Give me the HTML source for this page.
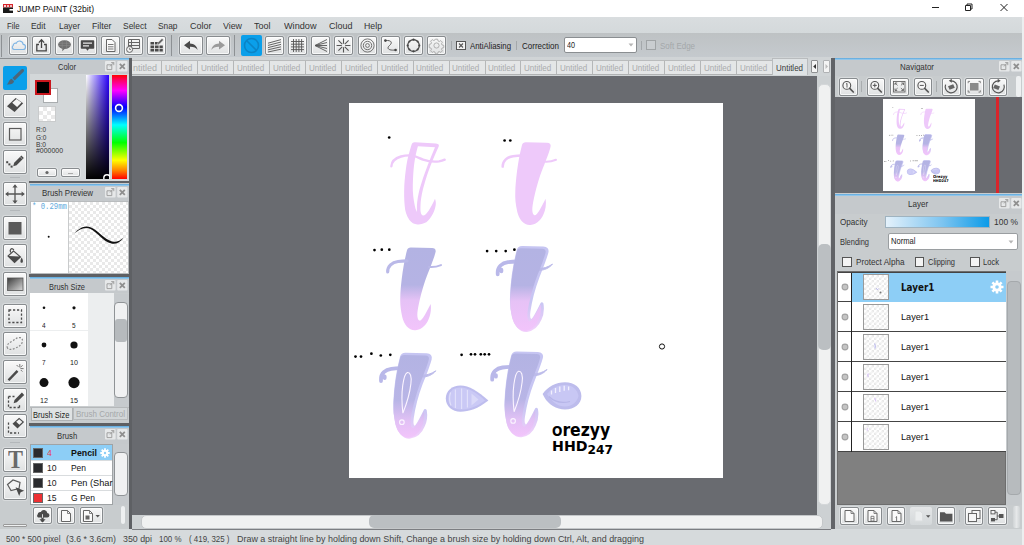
<!DOCTYPE html>
<html lang="en"><head><meta charset="utf-8"><title>JUMP PAINT (32bit)</title>
<style>
html,body{margin:0;padding:0;background:#fff;}
body{width:1024px;height:545px;overflow:hidden;position:relative;font-family:"Liberation Sans",sans-serif;}
#app{position:absolute;left:0;top:0;width:1024px;height:545px;overflow:hidden;background:#c8ccce;}
#app div,#app svg,#app span.t{position:absolute;box-sizing:border-box;}
span.t{white-space:nowrap;transform-origin:0 0;display:block;}
.btn{border:1px solid #878b8e;border-radius:2px;background:linear-gradient(#f9f9f9,#dfe1e2);box-shadow:0 0 0 1px rgba(255,255,255,.3),inset 0 0 0 1px rgba(255,255,255,.75);}
.cb{border:1px solid #555;background:#f4f4f4;}
</style></head>
<body><div id="app">
<div style="left:0px;top:0px;width:1024px;height:17px;background:#fff;"></div>
<svg style="left:3px;top:4px;" width="10" height="9" viewBox="0 0 10 9"><rect x="0" y="0" width="10" height="3.5" fill="#d8232a"/><rect x="0" y="3.5" width="10" height="5.5" fill="#1a1a1a"/><rect x="1" y="1" width="2" height="2" fill="#fff" opacity=".8"/><rect x="4" y="1" width="2" height="2" fill="#fff" opacity=".7"/><rect x="7" y="1" width="2" height="2" fill="#fff" opacity=".7"/><rect x="6.5" y="5" width="3.5" height="1.6" fill="#fff"/></svg>
<span id="t1" class="t" style="left:17px;top:3.77px;font-size:9.6px;line-height:9.6px;color:#111;transform:scaleX(0.8970);">JUMP PAINT (32bit)</span>
<svg style="left:925px;top:0px;" width="99" height="17" viewBox="0 0 99 17"><path d="M7 7.5h7" stroke="#222" stroke-width="1" fill="none"/><path d="M40.5 5.5h5v5h-5z M42 5.5v-1.5h5v5h-1.5" stroke="#222" stroke-width="1" fill="none"/><path d="M75.5 4l7 7M82.5 4l-7 7" stroke="#222" stroke-width="1" fill="none"/></svg>
<div style="left:0px;top:17px;width:1024px;height:16px;background:linear-gradient(#d9dddf,#d4d9db);"></div>
<span id="t2" class="t" style="left:6.5px;top:20.77px;font-size:9.6px;line-height:9.6px;color:#333;transform:scaleX(0.8081);">File</span>
<span id="t3" class="t" style="left:31px;top:20.77px;font-size:9.6px;line-height:9.6px;color:#333;transform:scaleX(0.8763);">Edit</span>
<span id="t4" class="t" style="left:58.5px;top:20.77px;font-size:9.6px;line-height:9.6px;color:#333;transform:scaleX(0.8750);">Layer</span>
<span id="t5" class="t" style="left:91.5px;top:20.77px;font-size:9.6px;line-height:9.6px;color:#333;transform:scaleX(0.9143);">Filter</span>
<span id="t6" class="t" style="left:122.5px;top:20.77px;font-size:9.6px;line-height:9.6px;color:#333;transform:scaleX(0.8811);">Select</span>
<span id="t7" class="t" style="left:158px;top:20.77px;font-size:9.6px;line-height:9.6px;color:#333;transform:scaleX(0.8703);">Snap</span>
<span id="t8" class="t" style="left:189.5px;top:20.77px;font-size:9.6px;line-height:9.6px;color:#333;transform:scaleX(0.9373);">Color</span>
<span id="t9" class="t" style="left:223px;top:20.77px;font-size:9.6px;line-height:9.6px;color:#333;transform:scaleX(0.9212);">View</span>
<span id="t10" class="t" style="left:254px;top:20.77px;font-size:9.6px;line-height:9.6px;color:#333;transform:scaleX(0.9370);">Tool</span>
<span id="t11" class="t" style="left:283.5px;top:20.77px;font-size:9.6px;line-height:9.6px;color:#333;transform:scaleX(0.9524);">Window</span>
<span id="t12" class="t" style="left:328.5px;top:20.77px;font-size:9.6px;line-height:9.6px;color:#333;transform:scaleX(0.9371);">Cloud</span>
<span id="t13" class="t" style="left:364px;top:20.77px;font-size:9.6px;line-height:9.6px;color:#333;transform:scaleX(0.9121);">Help</span>
<div style="left:0px;top:33px;width:1024px;height:25px;background:linear-gradient(#bec2c4,#c5cace);"></div>
<div style="left:1px;top:35px;width:1px;height:22px;background:#8d9194;"></div>
<div class="btn" style="left:9px;top:36px;width:19px;height:19px;"></div>
<div class="btn" style="left:32px;top:36px;width:19px;height:19px;"></div>
<div class="btn" style="left:55px;top:36px;width:19px;height:19px;"></div>
<div class="btn" style="left:78px;top:36px;width:19px;height:19px;"></div>
<div class="btn" style="left:101px;top:36px;width:19px;height:19px;"></div>
<div class="btn" style="left:124px;top:36px;width:19px;height:19px;"></div>
<div class="btn" style="left:147px;top:36px;width:19px;height:19px;"></div>
<div style="left:171px;top:35px;width:1px;height:21px;background:#8d9194;"></div>
<div class="btn" style="left:179px;top:36px;width:24px;height:19px;"></div>
<div class="btn" style="left:206px;top:36px;width:24px;height:19px;"></div>
<div style="left:234px;top:35px;width:1px;height:21px;background:#8d9194;"></div>
<div style="left:241px;top:35px;width:21px;height:21px;background:#0a9fea;border-radius:2px;"></div>
<div class="btn" style="left:265px;top:36px;width:19px;height:19px;"></div>
<div class="btn" style="left:288px;top:36px;width:19px;height:19px;"></div>
<div class="btn" style="left:311px;top:36px;width:19px;height:19px;"></div>
<div class="btn" style="left:334px;top:36px;width:19px;height:19px;"></div>
<div class="btn" style="left:357.5px;top:36px;width:19px;height:19px;"></div>
<div class="btn" style="left:381px;top:36px;width:19px;height:19px;"></div>
<div class="btn" style="left:404px;top:36px;width:19px;height:19px;"></div>
<div class="btn" style="left:427px;top:36px;width:19px;height:19px;"></div>
<div style="left:451px;top:41px;width:1.2px;height:8.5px;background:#a4a8ab;"></div>
<div class="cb" style="left:456px;top:41px;width:10px;height:9px;"></div>
<span id="t14" class="t" style="left:470px;top:40.87px;font-size:9.6px;line-height:9.6px;color:#222;transform:scaleX(0.8177);">AntiAliasing</span>
<div style="left:516px;top:41px;width:1.2px;height:8.5px;background:#a4a8ab;"></div>
<span id="t15" class="t" style="left:522px;top:40.87px;font-size:9.6px;line-height:9.6px;color:#222;transform:scaleX(0.8359);">Correction</span>
<div style="left:564px;top:37px;width:73px;height:16px;background:#fff;border:1px solid #8a8e91;border-radius:2px;"></div>
<span id="t16" class="t" style="left:567px;top:41.42px;font-size:8.6px;line-height:8.6px;color:#222;transform:scaleX(0.8366);">40</span>
<svg style="left:628px;top:43px;" width="6" height="4" viewBox="0 0 6 4"><path d="M0.5 0.5L3 3.5L5.5 0.5z" fill="#b5b5b5"/></svg>
<div style="left:641px;top:41px;width:1.2px;height:8.5px;background:#a4a8ab;"></div>
<div style="left:646px;top:40px;width:10px;height:10px;border:1px solid #a0a4a6;background:#c9cdd0;"></div>
<span id="t17" class="t" style="left:659.5px;top:40.87px;font-size:9.6px;line-height:9.6px;color:#a4a8aa;transform:scaleX(0.8306);">Soft Edge</span>
<div style="left:0px;top:58px;width:30px;height:472px;background:#c8ccce;"></div>
<div style="left:3px;top:66px;width:24px;height:24px;background:#0a9fea;border-radius:2px;"></div>
<div class="btn" style="left:3px;top:94px;width:24px;height:24px;"></div>
<div class="btn" style="left:3px;top:122px;width:24px;height:24px;"></div>
<div class="btn" style="left:3px;top:150px;width:24px;height:24px;"></div>
<div class="btn" style="left:3px;top:182px;width:24px;height:24px;"></div>
<div class="btn" style="left:3px;top:216px;width:24px;height:24px;"></div>
<div class="btn" style="left:3px;top:244px;width:24px;height:24px;"></div>
<div class="btn" style="left:3px;top:272px;width:24px;height:24px;"></div>
<div class="btn" style="left:3px;top:304px;width:24px;height:24px;"></div>
<div class="btn" style="left:3px;top:332px;width:24px;height:24px;"></div>
<div class="btn" style="left:3px;top:360px;width:24px;height:24px;"></div>
<div class="btn" style="left:3px;top:388px;width:24px;height:24px;"></div>
<div class="btn" style="left:3px;top:414px;width:24px;height:24px;"></div>
<div class="btn" style="left:3px;top:448px;width:24px;height:24px;"></div>
<div class="btn" style="left:3px;top:476px;width:24px;height:24px;"></div>
<div style="left:10px;top:177px;width:10px;height:1px;background:#b3b7ba;"></div>
<div style="left:10px;top:210px;width:10px;height:1px;background:#b3b7ba;"></div>
<div style="left:10px;top:299px;width:10px;height:1px;background:#b3b7ba;"></div>
<div style="left:10px;top:442px;width:10px;height:1px;background:#b3b7ba;"></div>
<div style="left:3px;top:524px;width:24px;height:3px;background:#eef0f1;border:1px solid #999;border-radius:1px;"></div>
<div style="left:0px;top:57.5px;width:30px;height:1px;background:#8a8e91;"></div>
<div style="left:30px;top:58px;width:99px;height:472px;background:#c8ccce;"></div>
<div style="left:129px;top:58px;width:3px;height:472px;background:#5e6064;"></div>
<div style="left:30px;top:73.6px;width:99px;height:107px;background:#d3d7d9;"></div>
<div style="left:30px;top:59px;width:99px;height:14.6px;background:#c5c9cc;"></div>
<div style="left:30px;top:58px;width:99px;height:2px;background:linear-gradient(#57a6dd,#a4d0ee);"></div>
<span id="t18" class="t" style="left:58px;top:62.37px;font-size:9.6px;line-height:9.6px;color:#333;transform:scaleX(0.7847);">Color</span>
<svg style="left:105px;top:61.2px;" width="22.5" height="11" viewBox="0 0 22.5 11"><rect x="0" y="0" width="10.6" height="10.6" rx="1" fill="#e6e8e9"/><path d="M2 3.8h4.800v4.800h-4.800z" stroke="#999" stroke-width=".9" fill="none"/><path d="M5 5.400L8.800 1.600M6.200 1.600h2.600v2.600" stroke="#999" stroke-width=".9" fill="none"/><rect x="12.2" y="0" width="10.300" height="10.600" rx="1" fill="#e6e8e9"/><path d="M14.800 2.800l5 5M19.800 2.800l-5 5" stroke="#8f8f8f" stroke-width="1.800" fill="none"/></svg>
<div style="left:29px;top:180.70000000000002px;width:100px;height:2.6px;background:#5e6064;"></div>
<div style="left:30px;top:184.8px;width:99px;height:16px;background:#c5c9cc;"></div>
<div style="left:30px;top:183.8px;width:99px;height:2px;background:linear-gradient(#57a6dd,#a4d0ee);"></div>
<span id="t19" class="t" style="left:42px;top:187.67px;font-size:9.6px;line-height:9.6px;color:#333;transform:scaleX(0.8245);">Brush Preview</span>
<svg style="left:105px;top:187.0px;" width="22.5" height="11" viewBox="0 0 22.5 11"><rect x="0" y="0" width="10.6" height="10.6" rx="1" fill="#e6e8e9"/><path d="M2 3.8h4.800v4.800h-4.800z" stroke="#999" stroke-width=".9" fill="none"/><path d="M5 5.400L8.800 1.600M6.200 1.600h2.600v2.600" stroke="#999" stroke-width=".9" fill="none"/><rect x="12.2" y="0" width="10.300" height="10.600" rx="1" fill="#e6e8e9"/><path d="M14.800 2.800l5 5M19.800 2.800l-5 5" stroke="#8f8f8f" stroke-width="1.800" fill="none"/></svg>
<div style="left:29px;top:273.5px;width:100px;height:3px;background:#5e6064;"></div>
<div style="left:30px;top:278px;width:99px;height:15.4px;background:#c5c9cc;"></div>
<div style="left:30px;top:277px;width:99px;height:2px;background:linear-gradient(#57a6dd,#a4d0ee);"></div>
<span id="t20" class="t" style="left:49px;top:281.57px;font-size:9.6px;line-height:9.6px;color:#333;transform:scaleX(0.7760);">Brush Size</span>
<svg style="left:105px;top:280.2px;" width="22.5" height="11" viewBox="0 0 22.5 11"><rect x="0" y="0" width="10.6" height="10.6" rx="1" fill="#e6e8e9"/><path d="M2 3.8h4.800v4.800h-4.800z" stroke="#999" stroke-width=".9" fill="none"/><path d="M5 5.400L8.800 1.600M6.200 1.600h2.600v2.600" stroke="#999" stroke-width=".9" fill="none"/><rect x="12.2" y="0" width="10.300" height="10.600" rx="1" fill="#e6e8e9"/><path d="M14.800 2.800l5 5M19.800 2.800l-5 5" stroke="#8f8f8f" stroke-width="1.800" fill="none"/></svg>
<div style="left:29px;top:423.0px;width:100px;height:2.5px;background:#5e6064;"></div>
<div style="left:30px;top:427px;width:99px;height:16.5px;background:#c5c9cc;"></div>
<div style="left:30px;top:426px;width:99px;height:2px;background:linear-gradient(#57a6dd,#a4d0ee);"></div>
<span id="t21" class="t" style="left:57px;top:431.27px;font-size:9.6px;line-height:9.6px;color:#333;transform:scaleX(0.8060);">Brush</span>
<svg style="left:105px;top:429.2px;" width="22.5" height="11" viewBox="0 0 22.5 11"><rect x="0" y="0" width="10.6" height="10.6" rx="1" fill="#e6e8e9"/><path d="M2 3.8h4.800v4.800h-4.800z" stroke="#999" stroke-width=".9" fill="none"/><path d="M5 5.400L8.800 1.600M6.200 1.600h2.600v2.600" stroke="#999" stroke-width=".9" fill="none"/><rect x="12.2" y="0" width="10.300" height="10.600" rx="1" fill="#e6e8e9"/><path d="M14.800 2.800l5 5M19.800 2.800l-5 5" stroke="#8f8f8f" stroke-width="1.800" fill="none"/></svg>
<div style="left:132px;top:57px;width:700px;height:19px;background:#d0d4d6;"></div>
<div style="left:132px;top:60px;width:676px;height:15px;background:#e4e6e7;border-top:1px solid #b9bbbc;border-bottom:1px solid #b0b2b3;"></div>
<span id="t22" class="t" style="left:132.5px;top:62.74px;font-size:9.4px;line-height:9.4px;color:#a9abac;transform:scaleX(0.9588);">ntitled</span>
<div style="left:161px;top:61px;width:1px;height:13px;background:#b5b7b8;"></div>
<span id="t23" class="t" style="left:165.0px;top:62.74px;font-size:9.4px;line-height:9.4px;color:#a9abac;transform:scaleX(0.8586);">Untitled</span>
<div style="left:197px;top:61px;width:1px;height:13px;background:#b5b7b8;"></div>
<span id="t24" class="t" style="left:200.92000000000002px;top:62.74px;font-size:9.4px;line-height:9.4px;color:#a9abac;transform:scaleX(0.8586);">Untitled</span>
<div style="left:233px;top:61px;width:1px;height:13px;background:#b5b7b8;"></div>
<span id="t25" class="t" style="left:236.84px;top:62.74px;font-size:9.4px;line-height:9.4px;color:#a9abac;transform:scaleX(0.8586);">Untitled</span>
<div style="left:269px;top:61px;width:1px;height:13px;background:#b5b7b8;"></div>
<span id="t26" class="t" style="left:272.76px;top:62.74px;font-size:9.4px;line-height:9.4px;color:#a9abac;transform:scaleX(0.8586);">Untitled</span>
<div style="left:305px;top:61px;width:1px;height:13px;background:#b5b7b8;"></div>
<span id="t27" class="t" style="left:308.68px;top:62.74px;font-size:9.4px;line-height:9.4px;color:#a9abac;transform:scaleX(0.8586);">Untitled</span>
<div style="left:341px;top:61px;width:1px;height:13px;background:#b5b7b8;"></div>
<span id="t28" class="t" style="left:344.6px;top:62.74px;font-size:9.4px;line-height:9.4px;color:#a9abac;transform:scaleX(0.8586);">Untitled</span>
<div style="left:377px;top:61px;width:1px;height:13px;background:#b5b7b8;"></div>
<span id="t29" class="t" style="left:380.52000000000004px;top:62.74px;font-size:9.4px;line-height:9.4px;color:#a9abac;transform:scaleX(0.8586);">Untitled</span>
<div style="left:413px;top:61px;width:1px;height:13px;background:#b5b7b8;"></div>
<span id="t30" class="t" style="left:416.44px;top:62.74px;font-size:9.4px;line-height:9.4px;color:#a9abac;transform:scaleX(0.8586);">Untitled</span>
<div style="left:449px;top:61px;width:1px;height:13px;background:#b5b7b8;"></div>
<span id="t31" class="t" style="left:452.36px;top:62.74px;font-size:9.4px;line-height:9.4px;color:#a9abac;transform:scaleX(0.8586);">Untitled</span>
<div style="left:485px;top:61px;width:1px;height:13px;background:#b5b7b8;"></div>
<span id="t32" class="t" style="left:488.28000000000003px;top:62.74px;font-size:9.4px;line-height:9.4px;color:#a9abac;transform:scaleX(0.8586);">Untitled</span>
<div style="left:520px;top:61px;width:1px;height:13px;background:#b5b7b8;"></div>
<span id="t33" class="t" style="left:524.2px;top:62.74px;font-size:9.4px;line-height:9.4px;color:#a9abac;transform:scaleX(0.8586);">Untitled</span>
<div style="left:556px;top:61px;width:1px;height:13px;background:#b5b7b8;"></div>
<span id="t34" class="t" style="left:560.1200000000001px;top:62.74px;font-size:9.4px;line-height:9.4px;color:#a9abac;transform:scaleX(0.8586);">Untitled</span>
<div style="left:592px;top:61px;width:1px;height:13px;background:#b5b7b8;"></div>
<span id="t35" class="t" style="left:596.0400000000001px;top:62.74px;font-size:9.4px;line-height:9.4px;color:#a9abac;transform:scaleX(0.8586);">Untitled</span>
<div style="left:628px;top:61px;width:1px;height:13px;background:#b5b7b8;"></div>
<span id="t36" class="t" style="left:631.96px;top:62.74px;font-size:9.4px;line-height:9.4px;color:#a9abac;transform:scaleX(0.8586);">Untitled</span>
<div style="left:664px;top:61px;width:1px;height:13px;background:#b5b7b8;"></div>
<span id="t37" class="t" style="left:667.8800000000001px;top:62.74px;font-size:9.4px;line-height:9.4px;color:#a9abac;transform:scaleX(0.8586);">Untitled</span>
<div style="left:700px;top:61px;width:1px;height:13px;background:#b5b7b8;"></div>
<span id="t38" class="t" style="left:703.8000000000002px;top:62.74px;font-size:9.4px;line-height:9.4px;color:#a9abac;transform:scaleX(0.8586);">Untitled</span>
<div style="left:736px;top:61px;width:1px;height:13px;background:#b5b7b8;"></div>
<span id="t39" class="t" style="left:739.72px;top:62.74px;font-size:9.4px;line-height:9.4px;color:#a9abac;transform:scaleX(0.8586);">Untitled</span>
<div style="left:771.94px;top:57.5px;width:36.5px;height:17.5px;background:#dfe3e5;border:1px solid #b9bcbe;border-bottom:none;"></div>
<span id="t40" class="t" style="left:775.94px;top:62.74px;font-size:9.4px;line-height:9.4px;color:#3a3a3a;transform:scaleX(0.8491);">Untitled</span>
<div style="left:811px;top:60px;width:7px;height:13px;background:#f4f4f4;border:1px solid #8e9092;border-radius:1px;"></div>
<div style="left:823px;top:60px;width:7px;height:13px;background:#f4f4f4;border:1px solid #b0b2b4;border-radius:1px;"></div>
<svg style="left:812px;top:63px;" width="5" height="7" viewBox="0 0 5 7"><path d="M4 1L1.2 3.5L4 6z" fill="#333"/></svg>
<svg style="left:824px;top:63px;" width="5" height="7" viewBox="0 0 5 7"><path d="M1.5 1L4 3.5L1.5 6z" fill="#bbb"/></svg>
<div style="left:132px;top:75.5px;width:685px;height:440px;background:#696b70;"></div>
<div style="left:349px;top:103px;width:374px;height:375px;background:#fff;"></div>
<div style="left:817px;top:75.5px;width:14px;height:454px;background:#cdd1d3;"></div>
<div style="left:817.5px;top:84px;width:13.5px;height:421px;background:#f0f1f1;border:1px solid #d4d7d9;border-radius:5px;"></div>
<div style="left:818px;top:243.5px;width:12.5px;height:106px;background:#bbbfc2;border-radius:5px;"></div>
<div style="left:132px;top:514.5px;width:699px;height:15px;background:#cdd1d3;"></div>
<div style="left:141px;top:514.5px;width:682px;height:14px;background:#f0f1f1;border:1px solid #c4c7c9;border-radius:5px;"></div>
<div style="left:369px;top:515px;width:192px;height:13px;background:#bbbfc2;border-radius:5px;"></div>
<div style="left:132px;top:528.5px;width:699px;height:1px;background:#7c7e82;"></div>
<div style="left:831px;top:58px;width:4px;height:472px;background:#616367;"></div>
<div style="left:835px;top:58px;width:189px;height:472px;background:#c8ccce;"></div>
<div style="left:835px;top:59px;width:189px;height:17px;background:#c5c9cc;"></div>
<div style="left:835px;top:58px;width:189px;height:2px;background:linear-gradient(#57a6dd,#a4d0ee);"></div>
<span id="t41" class="t" style="left:900px;top:62.37px;font-size:9.6px;line-height:9.6px;color:#333;transform:scaleX(0.8280);">Navigator</span>
<svg style="left:999px;top:61.2px;" width="22.5" height="11" viewBox="0 0 22.5 11"><rect x="0" y="0" width="10.6" height="10.6" rx="1" fill="#e6e8e9"/><path d="M2 3.8h4.800v4.800h-4.800z" stroke="#999" stroke-width=".9" fill="none"/><path d="M5 5.400L8.800 1.600M6.200 1.600h2.600v2.600" stroke="#999" stroke-width=".9" fill="none"/><rect x="12.2" y="0" width="10.300" height="10.600" rx="1" fill="#e6e8e9"/><path d="M14.800 2.800l5 5M19.800 2.800l-5 5" stroke="#8f8f8f" stroke-width="1.800" fill="none"/></svg>
<div style="left:835px;top:97px;width:189px;height:96px;background:#696b70;"></div>
<div style="left:883px;top:99px;width:92px;height:92px;background:#fff;"></div>
<div style="left:996.2px;top:97px;width:2.6px;height:96px;background:#d9252b;"></div>
<div style="left:835px;top:195px;width:189px;height:19px;background:#c5c9cc;"></div>
<div style="left:835px;top:194px;width:189px;height:2px;background:linear-gradient(#57a6dd,#a4d0ee);"></div>
<span id="t42" class="t" style="left:907.6px;top:199.47px;font-size:9.6px;line-height:9.6px;color:#333;transform:scaleX(0.8417);">Layer</span>
<svg style="left:999px;top:198.3px;" width="22.5" height="11" viewBox="0 0 22.5 11"><rect x="0" y="0" width="10.6" height="10.6" rx="1" fill="#e6e8e9"/><path d="M2 3.8h4.800v4.800h-4.800z" stroke="#999" stroke-width=".9" fill="none"/><path d="M5 5.400L8.800 1.600M6.200 1.600h2.600v2.600" stroke="#999" stroke-width=".9" fill="none"/><rect x="12.2" y="0" width="10.300" height="10.600" rx="1" fill="#e6e8e9"/><path d="M14.800 2.800l5 5M19.800 2.800l-5 5" stroke="#8f8f8f" stroke-width="1.800" fill="none"/></svg>
<div style="left:0px;top:528.5px;width:1024px;height:16.5px;background:#d6dadc;"></div>
<div style="left:132px;top:528.5px;width:699px;height:1.2px;background:#7c7e82;"></div>
<div style="left:1022.3px;top:17px;width:1.7px;height:528px;background:#eceeef;"></div>
<span id="t43" class="t" style="left:5.5px;top:533.54px;font-size:9.4px;line-height:9.4px;color:#444;transform:scaleX(0.8786);">500 * 500 pixel</span>
<span id="t44" class="t" style="left:66px;top:533.54px;font-size:9.4px;line-height:9.4px;color:#444;transform:scaleX(0.9316);">(3.6 * 3.6cm)</span>
<span id="t45" class="t" style="left:123px;top:533.54px;font-size:9.4px;line-height:9.4px;color:#444;transform:scaleX(0.9426);">350 dpi</span>
<span id="t46" class="t" style="left:158.5px;top:533.54px;font-size:9.4px;line-height:9.4px;color:#444;transform:scaleX(0.8461);">100 %</span>
<span id="t47" class="t" style="left:189px;top:533.54px;font-size:9.4px;line-height:9.4px;color:#444;transform:scaleX(0.8446);">( 419, 325 )</span>
<span id="t48" class="t" style="left:237px;top:533.54px;font-size:9.4px;line-height:9.4px;color:#444;transform:scaleX(0.9547);">Draw a straight line by holding down Shift, Change a brush size by holding down Ctrl, Alt, and dragging</span>
<div style="left:43px;top:88px;width:15px;height:15px;background:#fff;border:1px solid #a9adaf;"></div>
<div style="left:35px;top:80px;width:16px;height:15px;background:#000;border:2px solid #c9161d;"></div>
<div style="left:38px;top:105.5px;width:17.5px;height:16.5px;background-color:#fff;background-image:linear-gradient(45deg,#e9e9e9 25%,transparent 25%,transparent 75%,#e9e9e9 75%),linear-gradient(45deg,#e9e9e9 25%,transparent 25%,transparent 75%,#e9e9e9 75%);background-size:8px 8px;background-position:0 0,4px 4px;border:1px solid #c9cbcc;"></div>
<span id="t49" class="t" style="left:36px;top:125.87px;font-size:7.6px;line-height:7.6px;color:#333;transform:scaleX(0.8454);">R:0</span>
<span id="t50" class="t" style="left:36px;top:133.57px;font-size:7.6px;line-height:7.6px;color:#333;transform:scaleX(0.8571);">G:0</span>
<span id="t51" class="t" style="left:36px;top:140.77px;font-size:7.6px;line-height:7.6px;color:#333;transform:scaleX(0.8767);">B:0</span>
<span id="t52" class="t" style="left:36px;top:147.17px;font-size:7.6px;line-height:7.6px;color:#333;transform:scaleX(0.9128);">#000000</span>
<div class="btn" style="left:37px;top:168px;width:19.5px;height:8.5px;"></div>
<div class="btn" style="left:60.5px;top:168px;width:19px;height:8.5px;"></div>
<svg style="left:44px;top:170px;" width="6" height="5" viewBox="0 0 6 5"><circle cx="3" cy="2.5" r="1.6" fill="#666"/></svg>
<svg style="left:67px;top:172px;" width="7" height="3" viewBox="0 0 7 3"><path d="M1 1.5h5" stroke="#aaa" stroke-width="1"/></svg>
<div style="left:86.3px;top:75.4px;width:22.5px;height:103.6px;background:linear-gradient(to bottom,rgba(0,0,0,0),#000),linear-gradient(to right,#fff,#2a00ff);"></div>
<div style="left:112.2px;top:75.4px;width:15px;height:103.6px;background:linear-gradient(to bottom,#ff0000 0%,#ff0066 5%,#ff00ff 15%,#0000ff 31%,#00ffff 48%,#00ff00 65%,#ffff00 82%,#ff8000 92%,#ff0000 100%);"></div>
<svg style="left:114px;top:103px;" width="10" height="10" viewBox="0 0 10 10"><circle cx="5" cy="5" r="3.4" fill="#0a18c8" stroke="#fff" stroke-width="1.6"/></svg>
<svg style="left:102px;top:173px;" width="8" height="6" viewBox="0 0 8 6"><circle cx="5" cy="5" r="3.2" fill="none" stroke="#fff" stroke-width="1.4"/></svg>
<div style="left:30px;top:200.6px;width:98.5px;height:73px;background:#fff;border:1px solid #b9bcbe;"></div>
<div style="left:67.5px;top:201.5px;width:60px;height:71px;background-color:#fff;background-image:linear-gradient(45deg,#e9e9e9 25%,transparent 25%,transparent 75%,#e9e9e9 75%),linear-gradient(45deg,#e9e9e9 25%,transparent 25%,transparent 75%,#e9e9e9 75%);background-size:6px 6px;background-position:0 0,3px 3px;border-left:1px solid #c9cbcc;"></div>
<span id="t53" class="t" style="left:32px;top:202.72px;font-size:8.6px;line-height:8.6px;color:#62aadc;transform:scaleX(0.8482);font-family:&quot;Liberation Mono&quot;,monospace;">* 0.29mm</span>
<svg style="left:30px;top:200px;" width="99" height="74" viewBox="0 0 99 74"><circle cx="18.7" cy="36.7" r="1" fill="#111"/><path d="M44.5 33.5C49 28 55 25 61 27.5C68 30.5 74 39 82 41.5C86 42.6 90 41 93.8 37.5C90 42.5 86 44.6 81.5 43.6C73 41.5 67.5 32.5 60.5 29C55 26.5 49.5 29 44.5 33.5Z" fill="#111"/></svg>
<div style="left:30px;top:293.2px;width:84px;height:113px;background:#eceeef;"></div>
<div style="left:30px;top:293.2px;width:29.6px;height:37.2px;background:#fff;"></div>
<div style="left:60.4px;top:293.2px;width:28px;height:37.2px;background:#fff;"></div>
<div style="left:30px;top:331px;width:29.6px;height:36.6px;background:#fff;"></div>
<div style="left:60.4px;top:331px;width:28px;height:36.6px;background:#fff;"></div>
<div style="left:30px;top:368.2px;width:29.6px;height:37.6px;background:#fff;"></div>
<div style="left:60.4px;top:368.2px;width:28px;height:37.6px;background:#fff;"></div>
<svg style="left:30px;top:294px;" width="60" height="113" viewBox="0 0 60 113"><circle cx="14" cy="13.800000000000011" r="1.3" fill="#111"/><circle cx="44" cy="13.800000000000011" r="1.6" fill="#111"/><circle cx="14" cy="51" r="2.4" fill="#111"/><circle cx="44" cy="51" r="3.6" fill="#111"/><circle cx="14" cy="88.60000000000002" r="4.5" fill="#111"/><circle cx="44" cy="88.60000000000002" r="5.6" fill="#111"/></svg>
<span id="t54" class="t" style="left:42.2px;top:321.90px;font-size:7.8px;line-height:7.8px;color:#222;transform:scaleX(0.8288);">4</span>
<span id="t55" class="t" style="left:72.2px;top:321.90px;font-size:7.8px;line-height:7.8px;color:#222;transform:scaleX(0.8288);">5</span>
<span id="t56" class="t" style="left:42.2px;top:359.40px;font-size:7.8px;line-height:7.8px;color:#222;transform:scaleX(0.8288);">7</span>
<span id="t57" class="t" style="left:70.0px;top:359.40px;font-size:7.8px;line-height:7.8px;color:#222;transform:scaleX(0.9209);">10</span>
<span id="t58" class="t" style="left:40.0px;top:396.60px;font-size:7.8px;line-height:7.8px;color:#222;transform:scaleX(0.9209);">12</span>
<span id="t59" class="t" style="left:70.0px;top:396.60px;font-size:7.8px;line-height:7.8px;color:#222;transform:scaleX(0.9209);">15</span>
<div style="left:114px;top:294px;width:14.5px;height:113px;background:#c6cacd;"></div>
<div style="left:114px;top:302px;width:14px;height:96px;background:#f0f1f2;border:1px solid #8f9396;border-radius:4px;"></div>
<div style="left:115px;top:319px;width:12px;height:23px;background:#b6babd;border-radius:3px;"></div>
<div style="left:30px;top:407px;width:99px;height:1px;background:#b5b8ba;"></div>
<div style="left:30.5px;top:408px;width:42px;height:13px;background:#dfe2e3;border:1px solid #aeb1b3;border-top:none;"></div>
<div style="left:73px;top:408px;width:55px;height:12px;background:#d2d6d8;border:1px solid #b8bbbd;border-top:none;"></div>
<span id="t60" class="t" style="left:33px;top:409.64px;font-size:9.4px;line-height:9.4px;color:#222;transform:scaleX(0.8050);">Brush Size</span>
<span id="t61" class="t" style="left:76px;top:409.44px;font-size:9.4px;line-height:9.4px;color:#a5a8aa;transform:scaleX(0.8547);">Brush Control</span>
<div style="left:30px;top:444px;width:83px;height:61px;background:#fff;border:1px solid #9fa3a5;"></div>
<div style="left:31px;top:445px;width:81px;height:15px;background:#8dcef6;"></div>
<div style="left:33.3px;top:447.5px;width:10.2px;height:10px;background:#2b2b2e;border:1px solid #666;"></div>
<span id="t62" class="t" style="left:47.4px;top:448.00px;font-size:9.8px;line-height:9.8px;color:#e04050;transform:scaleX(0.8802);">4</span>
<span id="t63" class="t" style="left:71px;top:448.00px;font-size:9.8px;line-height:9.8px;color:#111;font-weight:bold;transform:scaleX(0.9004);">Pencil</span>
<div style="left:31px;top:460px;width:81px;height:1px;background:#d9dcde;"></div>
<div style="left:33.3px;top:462.5px;width:10.2px;height:10px;background:#2b2b2e;border:1px solid #666;"></div>
<span id="t64" class="t" style="left:47.4px;top:463.00px;font-size:9.8px;line-height:9.8px;color:#222;transform:scaleX(0.8802);">10</span>
<span id="t65" class="t" style="left:71px;top:463.00px;font-size:9.8px;line-height:9.8px;color:#111;transform:scaleX(0.8602);">Pen</span>
<div style="left:31px;top:475px;width:81px;height:1px;background:#d9dcde;"></div>
<div style="left:33.3px;top:477.5px;width:10.2px;height:10px;background:#2b2b2e;border:1px solid #666;"></div>
<span id="t66" class="t" style="left:47.4px;top:478.00px;font-size:9.8px;line-height:9.8px;color:#222;transform:scaleX(0.8802);">10</span>
<span id="t67" class="t" style="left:71px;top:478.00px;font-size:9.8px;line-height:9.8px;color:#111;transform:scaleX(0.9405);">Pen (Shar</span>
<div style="left:31px;top:490px;width:81px;height:1px;background:#d9dcde;"></div>
<div style="left:33.3px;top:492.5px;width:10.2px;height:10px;background:#ee3033;border:1px solid #666;"></div>
<span id="t68" class="t" style="left:47.4px;top:493.00px;font-size:9.8px;line-height:9.8px;color:#222;transform:scaleX(0.8802);">15</span>
<span id="t69" class="t" style="left:71px;top:493.00px;font-size:9.8px;line-height:9.8px;color:#111;transform:scaleX(0.8639);">G Pen</span>
<svg style="left:100px;top:447.5px;" width="10" height="10" viewBox="0 0 10 10"><g fill="#fff"><circle cx="5" cy="5" r="3.3"/><g stroke="#fff" stroke-width="1.8"><path d="M5 0.3v9.4M0.3 5h9.4M1.7 1.7l6.6 6.6M8.3 1.7l-6.6 6.6"/></g></g><circle cx="5" cy="5" r="1.2" fill="#8dcef6"/></svg>
<div style="left:113px;top:444px;width:15px;height:61px;background:#c6cacd;"></div>
<div style="left:113.5px;top:452px;width:14px;height:44px;background:#f0f1f2;border:1px solid #8f9396;border-radius:4px;"></div>
<div class="btn" style="left:33px;top:506.5px;width:19px;height:17.5px;"></div>
<div class="btn" style="left:57px;top:506.5px;width:18px;height:17.5px;"></div>
<div class="btn" style="left:80px;top:506.5px;width:22.5px;height:17.5px;"></div>
<div style="left:121px;top:506px;width:4px;height:18px;background:#eef0f1;border-radius:2px;"></div>
<div class="btn" style="left:839px;top:78px;width:18.5px;height:17.5px;"></div>
<div class="btn" style="left:866.5px;top:78px;width:18.5px;height:17.5px;"></div>
<div class="btn" style="left:890px;top:78px;width:18.5px;height:17.5px;"></div>
<div class="btn" style="left:913.5px;top:78px;width:18.5px;height:17.5px;"></div>
<div class="btn" style="left:942px;top:78px;width:18.5px;height:17.5px;"></div>
<div class="btn" style="left:965px;top:78px;width:18.5px;height:17.5px;"></div>
<div class="btn" style="left:988.5px;top:78px;width:18.5px;height:17.5px;"></div>
<div style="left:861px;top:81px;width:1px;height:11px;background:#a9adaf;"></div>
<div style="left:936px;top:81px;width:1px;height:11px;background:#a9adaf;"></div>
<div style="left:1016px;top:76px;width:5px;height:21px;background:#eef0f1;border-radius:2px;"></div>
<span id="t70" class="t" style="left:840px;top:217.34px;font-size:9.4px;line-height:9.4px;color:#333;transform:scaleX(0.8649);">Opacity</span>
<div style="left:885px;top:216px;width:105px;height:12px;background:linear-gradient(to right,#e4f1fb,#7cc4f0 55%,#0c9be8);border:1px solid #9fb3c0;"></div>
<span id="t71" class="t" style="left:994px;top:217.34px;font-size:9.4px;line-height:9.4px;color:#333;transform:scaleX(0.9025);">100 %</span>
<span id="t72" class="t" style="left:840px;top:237.04px;font-size:9.4px;line-height:9.4px;color:#333;transform:scaleX(0.7945);">Blending</span>
<div style="left:888px;top:233px;width:130px;height:16.5px;background:#fff;border:1px solid #9a9ea1;border-radius:2px;"></div>
<span id="t73" class="t" style="left:890.5px;top:236.81px;font-size:9.2px;line-height:9.2px;color:#222;transform:scaleX(0.8274);">Normal</span>
<svg style="left:1008px;top:239.5px;" width="6" height="4" viewBox="0 0 6 4"><path d="M0.5 0.5L3 3.5L5.5 0.5z" fill="#b5b5b5"/></svg>
<div class="cb" style="left:842px;top:257.3px;width:9.6px;height:9.6px;"></div>
<div class="cb" style="left:914.5px;top:257.3px;width:9.6px;height:9.6px;"></div>
<div class="cb" style="left:970px;top:257.3px;width:9.6px;height:9.6px;"></div>
<span id="t74" class="t" style="left:856px;top:257.34px;font-size:9.4px;line-height:9.4px;color:#333;transform:scaleX(0.8697);">Protect Alpha</span>
<span id="t75" class="t" style="left:928px;top:257.34px;font-size:9.4px;line-height:9.4px;color:#333;transform:scaleX(0.7970);">Clipping</span>
<span id="t76" class="t" style="left:983px;top:257.34px;font-size:9.4px;line-height:9.4px;color:#333;transform:scaleX(0.8076);">Lock</span>
<div style="left:837px;top:271px;width:169px;height:234px;background:#808080;border:1px solid #6d6d6d;"></div>
<div style="left:838px;top:272px;width:167.5px;height:30px;background:#fff;border-bottom:1px solid #444;"></div>
<div style="left:852px;top:272px;width:153.5px;height:29.5px;background:#8dcef6;"></div>
<div style="left:863.3px;top:274px;width:25.6px;height:25.6px;background-color:#fff;background-image:linear-gradient(45deg,#e9e9e9 25%,transparent 25%,transparent 75%,#e9e9e9 75%),linear-gradient(45deg,#e9e9e9 25%,transparent 25%,transparent 75%,#e9e9e9 75%);background-size:5px 5px;background-position:0 0,2.5px 2.5px;border:1px solid #9a9a9a;"></div>
<svg style="left:863.3px;top:274px;" width="25.6" height="25.6" viewBox="0 0 25.6 25.6"><path d="M13 14l1.500 2l1-1.500" stroke="#b9b8e8" stroke-width="1" fill="none"/><circle cx="17.500" cy="18.500" r="1" fill="#777"/></svg>
<svg style="left:840.5px;top:283px;" width="8" height="8" viewBox="0 0 8 8"><circle cx="4" cy="4" r="2.900" fill="#c4c4c4" stroke="#a2a2a2" stroke-width="1.100"/></svg>
<span id="t77" class="t" style="left:901px;top:282.97px;font-size:10.2px;line-height:10.2px;color:#111;font-weight:bold;transform:scaleX(0.8652);font-family:&quot;DejaVu Sans&quot;,sans-serif;">Layer1</span>
<div style="left:838px;top:302px;width:167.5px;height:30px;background:#fff;border-bottom:1px solid #444;"></div>
<div style="left:863.3px;top:304px;width:25.6px;height:25.6px;background-color:#fff;background-image:linear-gradient(45deg,#e9e9e9 25%,transparent 25%,transparent 75%,#e9e9e9 75%),linear-gradient(45deg,#e9e9e9 25%,transparent 25%,transparent 75%,#e9e9e9 75%);background-size:5px 5px;background-position:0 0,2.5px 2.5px;border:1px solid #9a9a9a;"></div>
<svg style="left:840.5px;top:313px;" width="8" height="8" viewBox="0 0 8 8"><circle cx="4" cy="4" r="2.900" fill="#c4c4c4" stroke="#a2a2a2" stroke-width="1.100"/></svg>
<span id="t78" class="t" style="left:901px;top:312.22px;font-size:9.9px;line-height:9.9px;color:#111;transform:scaleX(0.9271);">Layer1</span>
<div style="left:838px;top:332px;width:167.5px;height:30px;background:#fff;border-bottom:1px solid #444;"></div>
<div style="left:863.3px;top:334px;width:25.6px;height:25.6px;background-color:#fff;background-image:linear-gradient(45deg,#e9e9e9 25%,transparent 25%,transparent 75%,#e9e9e9 75%),linear-gradient(45deg,#e9e9e9 25%,transparent 25%,transparent 75%,#e9e9e9 75%);background-size:5px 5px;background-position:0 0,2.5px 2.5px;border:1px solid #9a9a9a;"></div>
<svg style="left:863.3px;top:334px;" width="25.6" height="25.6" viewBox="0 0 25.6 25.6"><path d="M11.500 9.500c1 1.500 1 3 .5 5" stroke="#c3c2f0" stroke-width="1.300" fill="none"/></svg>
<svg style="left:840.5px;top:343px;" width="8" height="8" viewBox="0 0 8 8"><circle cx="4" cy="4" r="2.900" fill="#c4c4c4" stroke="#a2a2a2" stroke-width="1.100"/></svg>
<span id="t79" class="t" style="left:901px;top:342.22px;font-size:9.9px;line-height:9.9px;color:#111;transform:scaleX(0.9271);">Layer1</span>
<div style="left:838px;top:362px;width:167.5px;height:30px;background:#fff;border-bottom:1px solid #444;"></div>
<div style="left:863.3px;top:364px;width:25.6px;height:25.6px;background-color:#fff;background-image:linear-gradient(45deg,#e9e9e9 25%,transparent 25%,transparent 75%,#e9e9e9 75%),linear-gradient(45deg,#e9e9e9 25%,transparent 25%,transparent 75%,#e9e9e9 75%);background-size:5px 5px;background-position:0 0,2.5px 2.5px;border:1px solid #9a9a9a;"></div>
<svg style="left:863.3px;top:364px;" width="25.6" height="25.6" viewBox="0 0 25.6 25.6"><path d="M5.500 9.500c-1 1.200-1 2.500 0 3.500" stroke="#d8c6f4" stroke-width="1.200" fill="none"/></svg>
<svg style="left:840.5px;top:373px;" width="8" height="8" viewBox="0 0 8 8"><circle cx="4" cy="4" r="2.900" fill="#c4c4c4" stroke="#a2a2a2" stroke-width="1.100"/></svg>
<span id="t80" class="t" style="left:901px;top:372.22px;font-size:9.9px;line-height:9.9px;color:#111;transform:scaleX(0.9271);">Layer1</span>
<div style="left:838px;top:392px;width:167.5px;height:30px;background:#fff;border-bottom:1px solid #444;"></div>
<div style="left:863.3px;top:394px;width:25.6px;height:25.6px;background-color:#fff;background-image:linear-gradient(45deg,#e9e9e9 25%,transparent 25%,transparent 75%,#e9e9e9 75%),linear-gradient(45deg,#e9e9e9 25%,transparent 25%,transparent 75%,#e9e9e9 75%);background-size:5px 5px;background-position:0 0,2.5px 2.5px;border:1px solid #9a9a9a;"></div>
<svg style="left:863.3px;top:394px;" width="25.6" height="25.6" viewBox="0 0 25.6 25.6"><path d="M11.500 4c1 1 1.500 2 1 3.500" stroke="#dcc8f6" stroke-width="1.200" fill="none"/></svg>
<svg style="left:840.5px;top:403px;" width="8" height="8" viewBox="0 0 8 8"><circle cx="4" cy="4" r="2.900" fill="#c4c4c4" stroke="#a2a2a2" stroke-width="1.100"/></svg>
<span id="t81" class="t" style="left:901px;top:402.22px;font-size:9.9px;line-height:9.9px;color:#111;transform:scaleX(0.9271);">Layer1</span>
<div style="left:838px;top:422px;width:167.5px;height:30px;background:#fff;border-bottom:1px solid #444;"></div>
<div style="left:863.3px;top:424px;width:25.6px;height:25.6px;background-color:#fff;background-image:linear-gradient(45deg,#e9e9e9 25%,transparent 25%,transparent 75%,#e9e9e9 75%),linear-gradient(45deg,#e9e9e9 25%,transparent 25%,transparent 75%,#e9e9e9 75%);background-size:5px 5px;background-position:0 0,2.5px 2.5px;border:1px solid #9a9a9a;"></div>
<svg style="left:863.3px;top:424px;" width="25.6" height="25.6" viewBox="0 0 25.6 25.6"><path d="M5 4c-1 .8-1.200 1.800-.5 3" stroke="#e4d2f8" stroke-width="1.200" fill="none"/></svg>
<svg style="left:840.5px;top:433px;" width="8" height="8" viewBox="0 0 8 8"><circle cx="4" cy="4" r="2.900" fill="#c4c4c4" stroke="#a2a2a2" stroke-width="1.100"/></svg>
<span id="t82" class="t" style="left:901px;top:432.22px;font-size:9.9px;line-height:9.9px;color:#111;transform:scaleX(0.9271);">Layer1</span>
<div style="left:851px;top:272px;width:1px;height:180px;background:#222;"></div>
<div style="left:837.5px;top:271.5px;width:168.5px;height:1px;background:#444;"></div>
<svg style="left:990px;top:280px;" width="14" height="14" viewBox="0 0 14 14"><g stroke="#fff" stroke-width="2.6"><path d="M7 0.5v13M0.5 7h13M2.4 2.4l9.2 9.2M11.6 2.4l-9.2 9.2"/></g><circle cx="7" cy="7" r="4.6" fill="#fff"/><circle cx="7" cy="7" r="1.8" fill="#8dcef6"/></svg>
<div style="left:1006px;top:271px;width:16px;height:234px;background:#c6cacd;"></div>
<div style="left:1007px;top:281px;width:14px;height:213.5px;background:#b7bbbe;border:1px solid #a5a9ac;border-radius:4px;"></div>
<div class="btn" style="left:839.5px;top:507px;width:19px;height:18px;"></div>
<div class="btn" style="left:863px;top:507px;width:18.6px;height:18px;"></div>
<div class="btn" style="left:886.5px;top:507px;width:18.4px;height:18px;"></div>
<div class="btn" style="left:936.7px;top:507px;width:18.4px;height:18px;"></div>
<div class="btn" style="left:964.5px;top:507px;width:18.5px;height:18px;"></div>
<div class="btn" style="left:988px;top:507px;width:18.7px;height:18px;"></div>
<div style="left:909.7px;top:507px;width:22px;height:18px;background:linear-gradient(#e4e6e7,#d4d8da);border-radius:2px;"></div>
<div style="left:959px;top:510px;width:1px;height:12px;background:#b3b7ba;"></div>
<div style="left:1012.5px;top:505.5px;width:7.5px;height:22px;background:linear-gradient(to right,#cfd3d5,#e6e8e9,#cfd3d5);border-radius:2px;"></div>
<svg style="left:349px;top:103px;" width="374" height="374" viewBox="0 0 374 374"><defs><linearGradient id="gA" x1="0" y1="0" x2="0" y2="1"><stop offset="0" stop-color="#b3b3e3"/><stop offset=".45" stop-color="#b5b3e4"/><stop offset=".64" stop-color="#e6c2f6"/><stop offset="1" stop-color="#f2c4fb"/></linearGradient><linearGradient id="gE" x1="0" y1="0" x2="0" y2="1"><stop offset="0" stop-color="#b3b3e3"/><stop offset=".55" stop-color="#b8b5e6"/><stop offset=".8" stop-color="#e2c1f5"/><stop offset="1" stop-color="#f2c4fb"/></linearGradient><linearGradient id="gB" x1="0" y1="0" x2="0" y2="1"><stop offset="0" stop-color="#c6c5f2"/><stop offset=".66" stop-color="#c8c6f3"/><stop offset=".9" stop-color="#e6ccf8"/><stop offset="1" stop-color="#f0d0fb"/></linearGradient></defs><g transform="translate(56,39.599999999999994)"><path d="M6.4,2.6 Q7,-0.5 10,-0.3 L31,0.8 Q35,1.2 33.5,4.5 C31,10 28,17 25.6,22.8 C22,32 19.5,41 17.9,47 C16.5,53 15.6,58 15.5,63.2 C15.3,68 15.5,72 17.9,72.9 C21,73.5 26,65 30,56.1 C31,59 31,61 30.6,63.2 C30,67 28.5,70.5 26.6,73.3 C24.5,77 22,79.5 19.5,80.4 C17.5,81.5 15,82 12.5,81.8 C9,81.5 6.5,80 4.4,77.3 C1.5,73.5 0,68.5 -0.3,63.2 C-0.9,57 -1,50 -0.7,43 C-0.3,36 0.5,29 1.4,22.8 C2.5,16 4.3,9 6.4,2.6Z" fill="#eec9fa"/><path d="M12.9,3.6 L30,4.6 C27.5,10.5 25,16.5 22.6,22.8 C19.5,31 16.5,39.5 14.5,47 C13,53 12.2,58.5 11.9,63.2 L11.9,69.3 C10.9,67.5 10.2,65.5 9.8,63.2 C8.5,57 7.6,50 7.8,43 C8,36 8.3,29 9,22.8 C9.8,16 11.2,9.5 12.9,3.6Z" fill="#fff"/><path d="M-13.6,23.6 C-13.4,19 -9.5,15.6 -4,13.9 C-0.5,12.9 3,12.6 6,12.8 C10,13.2 14,15.5 18,17 C23,18.8 29,19.3 34,18.8 C36,18.5 38,17.9 39.7,17.1" stroke="#eec9fa" stroke-width="2.4" fill="none" stroke-linecap="round"/></g><g transform="translate(166,39)"><path d="M7,3 Q7.8,0.2 11,0.3 L32,0.8 Q36.5,1 35.5,5 C34,11 30,21 26.6,29.5 C23,39 19,54 17.6,63.8 C17,68 17.3,72.5 19.5,73.3 C22,74 27,64 30.6,56.7 C31.5,62 30.5,68 28.6,71.9 C26.5,77 22.5,82 15.5,83 C9,83.5 4,77 2.3,69.9 C0.5,62 0,56 0.3,49.7 C0.6,40 2.5,20 7,3 Z" fill="#eec9fa"/><path d="M-12.3,24.6 C-12.5,19 -8,15 -2,14.2 C1,13.8 4,13.6 7,13.6" stroke="#eec9fa" stroke-width="2.5" fill="none" stroke-linecap="round"/><path d="M29,19.6 C33,20 37,19.4 41,17.8" stroke="#eec9fa" stroke-width="2" fill="none" stroke-linecap="round"/></g><g transform="translate(51,144.3)"><path d="M7,3 Q7.8,0.2 11,0.3 L32,0.8 Q36.5,1 35.5,5 C34,11 30,21 26.6,29.5 C23,39 19,54 17.6,63.8 C17,68 17.3,72.5 19.5,73.3 C22,74 27,64 30.6,56.7 C31.5,62 30.5,68 28.6,71.9 C26.5,77 22.5,82 15.5,83 C9,83.5 4,77 2.3,69.9 C0.5,62 0,56 0.3,49.7 C0.6,40 2.5,20 7,3 Z" fill="url(#gA)"/><path d="M-12.3,24.6 C-12.5,19 -8,15 -2,14.2 C1,13.8 4,13.6 7,13.6" stroke="#bab9e8" stroke-width="3.2" fill="none" stroke-linecap="round"/><path d="M29,19.6 C33,20 37,19.4 41,17.8" stroke="#bab9e8" stroke-width="2" fill="none" stroke-linecap="round"/></g><g transform="translate(161,144.9)"><path d="M7,3 Q7.8,0.2 11,0.3 L32,0.8 Q36.5,1 35.5,5 C34,11 30,21 26.6,29.5 C23,39 19,54 17.6,63.8 C17,68 17.3,72.5 19.5,73.3 C22,74 27,64 30.6,56.7 C31.5,62 30.5,68 28.6,71.9 C26.5,77 22.5,82 15.5,83 C9,83.5 4,77 2.3,69.9 C0.5,62 0,56 0.3,49.7 C0.6,40 2.5,20 7,3 Z" fill="url(#gB)" stroke="url(#gB)" stroke-width="3.2" stroke-linejoin="round" transform="translate(1.3,-0.6)"/><path d="M-12.3,24.6 C-12.5,19 -8,15 -2,14.2 C1,13.8 4,13.6 7,13.6 M-12.3,24.6 v1.8 M-8.6,21.8 v1.6" stroke="#b9b8e9" stroke-width="3.8" fill="none" stroke-linecap="round"/><path d="M29,20.6 C33,20.6 38,19.4 42.5,16.2 C39,20.5 34,22.4 29,22.4Z" fill="#bcbbea" stroke="#bcbbea" stroke-width="1"/><path d="M7,3 Q7.8,0.2 11,0.3 L32,0.8 Q36.5,1 35.5,5 C34,11 30,21 26.6,29.5 C23,39 19,54 17.6,63.8 C17,68 17.3,72.5 19.5,73.3 C22,74 27,64 30.6,56.7 C31.5,62 30.5,68 28.6,71.9 C26.5,77 22.5,82 15.5,83 C9,83.5 4,77 2.3,69.9 C0.5,62 0,56 0.3,49.7 C0.6,40 2.5,20 7,3 Z" fill="url(#gA)"/></g><g transform="translate(44.30000000000001,251.60000000000002)"><path d="M7,3 Q7.8,0.2 11,0.3 L32,0.8 Q36.5,1 35.5,5 C34,11 30,21 26.6,29.5 C23,39 19,54 17.6,63.8 C17,68 17.3,72.5 19.5,73.3 C22,74 27,64 30.6,56.7 C31.5,62 30.5,68 28.6,71.9 C26.5,77 22.5,82 15.5,83 C9,83.5 4,77 2.3,69.9 C0.5,62 0,56 0.3,49.7 C0.6,40 2.5,20 7,3 Z" fill="url(#gB)" stroke="url(#gB)" stroke-width="3.2" stroke-linejoin="round" transform="translate(1.3,-0.6)"/><path d="M-12.3,24.6 C-12.5,19 -8,15 -2,14.2 C1,13.8 4,13.6 7,13.6 M-12.3,24.6 v1.8 M-8.6,21.8 v1.6" stroke="#b9b8e9" stroke-width="3.8" fill="none" stroke-linecap="round"/><path d="M29,20.6 C33,20.6 38,19.4 42.5,16.2 C39,20.5 34,22.4 29,22.4Z" fill="#bcbbea" stroke="#bcbbea" stroke-width="1"/><path d="M7,3 Q7.8,0.2 11,0.3 L32,0.8 Q36.5,1 35.5,5 C34,11 30,21 26.6,29.5 C23,39 19,54 17.6,63.8 C17,68 17.3,72.5 19.5,73.3 C22,74 27,64 30.6,56.7 C31.5,62 30.5,68 28.6,71.9 C26.5,77 22.5,82 15.5,83 C9,83.5 4,77 2.3,69.9 C0.5,62 0,56 0.3,49.7 C0.6,40 2.5,20 7,3 Z" fill="url(#gE)"/><path d="M14,18 C17,17.5 18.6,22 17.6,29 C16.6,38 13,50 9.6,58.5 C8.6,50 8.2,40 9.4,31 C10.4,24 11.6,18.6 14,18Z" fill="none" stroke="#fbf4ff" stroke-width="1.1"/><circle cx="8.6" cy="67.6" r="2.3" fill="none" stroke="#fbf4ff" stroke-width="1.1"/></g><g transform="translate(155.5,250.3)"><path d="M7,3 Q7.8,0.2 11,0.3 L32,0.8 Q36.5,1 35.5,5 C34,11 30,21 26.6,29.5 C23,39 19,54 17.6,63.8 C17,68 17.3,72.5 19.5,73.3 C22,74 27,64 30.6,56.7 C31.5,62 30.5,68 28.6,71.9 C26.5,77 22.5,82 15.5,83 C9,83.5 4,77 2.3,69.9 C0.5,62 0,56 0.3,49.7 C0.6,40 2.5,20 7,3 Z" fill="url(#gB)" stroke="url(#gB)" stroke-width="3.2" stroke-linejoin="round" transform="translate(1.3,-0.6)"/><path d="M-12.3,24.6 C-12.5,19 -8,15 -2,14.2 C1,13.8 4,13.6 7,13.6 M-12.3,24.6 v1.8 M-8.6,21.8 v1.6" stroke="#b9b8e9" stroke-width="3.8" fill="none" stroke-linecap="round"/><path d="M29,20.6 C33,20.6 38,19.4 42.5,16.2 C39,20.5 34,22.4 29,22.4Z" fill="#bcbbea" stroke="#bcbbea" stroke-width="1"/><path d="M7,3 Q7.8,0.2 11,0.3 L32,0.8 Q36.5,1 35.5,5 C34,11 30,21 26.6,29.5 C23,39 19,54 17.6,63.8 C17,68 17.3,72.5 19.5,73.3 C22,74 27,64 30.6,56.7 C31.5,62 30.5,68 28.6,71.9 C26.5,77 22.5,82 15.5,83 C9,83.5 4,77 2.3,69.9 C0.5,62 0,56 0.3,49.7 C0.6,40 2.5,20 7,3 Z" fill="url(#gE)"/><path d="M14,18 C17,17.5 18.6,22 17.6,29 C16.6,38 13,50 9.6,58.5 C8.6,50 8.2,40 9.4,31 C10.4,24 11.6,18.6 14,18Z" fill="none" stroke="#fbf4ff" stroke-width="1.1"/><circle cx="8.6" cy="67.6" r="2.3" fill="none" stroke="#fbf4ff" stroke-width="1.1"/></g><g transform="translate(-349,-103)"><path d="M445.8,398.5 C445.8,390.8 452,385.4 460.5,385.4 C469,385.4 478,391 488.4,400.6 C478,408.8 469,411.8 460.5,411.8 C452,411.8 445.8,406.2 445.8,398.5Z" fill="#bebdee"/><path d="M448.2,398.5 C448.2,392.4 453,387.6 460.5,387.6 C468,387.6 476,392.4 485,400.4 C476,406.8 468,409.600 460.5,409.600 C453,409.600 448.2,404.6 448.2,398.5Z" fill="#cac9f5"/><path d="M450.6,392.5 C449.200,396 449.300,402 451,405.5 M455.4,389.5 V408 M461.6,388.600 V409 M467.4,390 V407.6" stroke="#e2e1fa" stroke-width="1.1" fill="none"/><path d="M471.5,393.5 L478.5,399.6 L471.5,405.5Z" fill="#dad9f8"/><path d="M542.6,394 C548,386.5 556,382.3 565,382.3 C574.5,382.3 581.4,388 581.4,396 C581.4,404 574.5,409.5 565,409.5 C556.5,409.5 548,404 544.5,397.5Z" fill="#bdbcec"/><path d="M547,394 C552,388 558,385 565,385 C572,385 577.5,389.5 578.5,396 C577,402 572,406.5 565,406.5 C558,406.5 552,402 547,394Z" fill="#c8c7f4"/><path d="M551.5,390.500 v4 M555.500,388 v5 M559.800,386.400 v5.500 M564.200,385.800 v5 M568.600,386.600 v3.600" stroke="#f1f0fd" stroke-width="1.300"/><path d="M549,396.500 C554,401.500 562,403.500 570,401.500" stroke="#b6b5e8" stroke-width="1.200" fill="none"/></g><circle cx="40.2" cy="34.5" r="1.35" fill="#000"/><circle cx="155.6" cy="37.5" r="1.35" fill="#000"/><circle cx="161.3" cy="37.5" r="1.35" fill="#000"/><circle cx="25.5" cy="147.1" r="1.35" fill="#000"/><circle cx="32.8" cy="146.7" r="1.35" fill="#000"/><circle cx="40.3" cy="146.7" r="1.35" fill="#000"/><circle cx="138.1" cy="148.1" r="1.35" fill="#000"/><circle cx="147.2" cy="148.1" r="1.35" fill="#000"/><circle cx="156.7" cy="148.1" r="1.35" fill="#000"/><circle cx="165.4" cy="146.7" r="1.35" fill="#000"/><circle cx="6.5" cy="253.6" r="1.35" fill="#000"/><circle cx="12.0" cy="253.6" r="1.35" fill="#000"/><circle cx="22.4" cy="250.7" r="1.35" fill="#000"/><circle cx="31.8" cy="252.5" r="1.35" fill="#000"/><circle cx="41.3" cy="251.8" r="1.35" fill="#000"/><circle cx="112.6" cy="251.8" r="1.35" fill="#000"/><circle cx="122.0" cy="251.3" r="1.35" fill="#000"/><circle cx="126.0" cy="251.3" r="1.35" fill="#000"/><circle cx="131.8" cy="251.3" r="1.35" fill="#000"/><circle cx="135.7" cy="251.3" r="1.35" fill="#000"/><circle cx="140.0" cy="251.3" r="1.35" fill="#000"/><circle cx="313" cy="243.5" r="2.6" fill="#fff" stroke="#111" stroke-width="1"/></svg>
<span id="t83" class="t" style="left:552.3px;top:420.96px;font-size:18px;line-height:18px;color:#000;font-weight:bold;transform:scaleX(0.8706);font-family:&quot;DejaVu Sans&quot;,sans-serif;letter-spacing:0px;"><span style="font-size:.78em">O</span>rezyy</span>
<span id="t84" class="t" style="left:552.3px;top:440.12px;font-size:13.8px;line-height:13.8px;color:#000;font-weight:bold;transform:scaleX(1.0285);font-family:&quot;DejaVu Sans&quot;,sans-serif;letter-spacing:0px;">HHD<span style="font-size:.86em;position:relative;top:2.6px">247</span></span>
<svg style="left:9px;top:36px;" width="19" height="19" viewBox="0 0 19 19"><path d="M5.5 13.5h8.2a2.6 2.6 0 0 0 .4-5.2a3.6 3.6 0 0 0-6.9-1.1a2.4 2.4 0 0 0-3 2.3a2.2 2.2 0 0 0 1.3 4z" fill="none" stroke="#7fb5e4" stroke-width="1.2"/></svg>
<svg style="left:32px;top:36px;" width="19" height="19" viewBox="0 0 19 19"><path d="M7 8.5H4.8v6.3h9.4V8.5H12" fill="none" stroke="#444" stroke-width="1.3"/><path d="M9.5 12V4.2M6.8 6.6L9.5 3.8l2.7 2.8" fill="none" stroke="#444" stroke-width="1.3"/></svg>
<svg style="left:55px;top:36px;" width="19" height="19" viewBox="0 0 19 19"><ellipse cx="9.5" cy="8.6" rx="6.4" ry="4.4" fill="#707070"/><path d="M7.5 12l-0.3 3.2l3-2.6z" fill="#707070"/><path d="M4 7.2h11M3.6 9.6h11.8M7.2 4.6v8M11.6 4.6v8" stroke="#8b8b8b" stroke-width=".6"/></svg>
<svg style="left:78px;top:36px;" width="19" height="19" viewBox="0 0 19 19"><path d="M3.6 4.2h11.8a.8.8 0 0 1 .8.8v7a.8.8 0 0 1-.8.8h-4.4l-1.5 1.9l-1.5-1.9H3.6a.8.8 0 0 1-.8-.8v-7a.8.8 0 0 1 .8-.8z" fill="#4a4a4a"/><path d="M5 7.2h9M5 9.8h6" stroke="#e8e8e8" stroke-width="1.2"/></svg>
<svg style="left:101px;top:36px;" width="19" height="19" viewBox="0 0 19 19"><path d="M5.5 3.5h5.5l3 3v9h-8.5z" fill="#fafafa" stroke="#666" stroke-width="1"/><path d="M7 8.5h5.5M7 10.8h5.5M7 13h5.5" stroke="#777" stroke-width="1"/></svg>
<svg style="left:124px;top:36px;" width="19" height="19" viewBox="0 0 19 19"><path d="M4.5 3.5h11v9h-11z M4.5 6.5h11 M4.5 9.5h11 M7.5 3.5v9" fill="none" stroke="#666" stroke-width="1"/><circle cx="5.6" cy="13.4" r="3" fill="#f2f2f2" stroke="#666" stroke-width="1"/><path d="M5.6 11.8v1.7h1.4" stroke="#666" stroke-width=".8" fill="none"/></svg>
<svg style="left:147px;top:36px;" width="19" height="19" viewBox="0 0 19 19"><path d="M3.5 6h3.6v2.6H3.5z M8 6h3.6v2.6H8z M3.5 9.4h3.6V12H3.5z M8 9.4h3.6V12H8z M12.5 9.4h3.3V12h-3.3z M3.5 12.8h3.6v2.6H3.5z M8 12.8h3.6v2.6H8z M12.5 12.8h3.3v2.6h-3.3z" fill="#4a4a4a"/><path d="M10 8.8l1-2.4l4-4l1.5 1.5l-4 4z" fill="#5a5a5a" stroke="#eee" stroke-width=".5"/></svg>
<svg style="left:179px;top:36px;" width="24" height="19" viewBox="0 0 24 19"><path d="M5 9.2l6-4.4v2.6c4 .2 7 2.3 7.6 6.6c-1.6-2.4-4-3.4-7.6-3.3v2.9z" fill="#4a4a4a"/></svg>
<svg style="left:206px;top:36px;" width="24" height="19" viewBox="0 0 24 19"><path d="M19 9.2l-6-4.4v2.6c-4 .2-7 2.3-7.6 6.6c1.6-2.4 4-3.4 7.6-3.3v2.9z" fill="#9a9a9a"/></svg>
<svg style="left:241px;top:35px;" width="21" height="21" viewBox="0 0 21 21"><circle cx="10.5" cy="10.5" r="7" fill="none" stroke="#0b84c6" stroke-width="1.6"/><path d="M5.5 5.5l10 10" stroke="#0b84c6" stroke-width="1.6"/></svg>
<svg style="left:265px;top:36px;" width="19" height="19" viewBox="0 0 19 19"><path d="M3 7.2l13-3.6M3 9.4l13-3.4M3 11.6l13-3.2M3 13.8l13-3M3 16l13-2.8" stroke="#555" stroke-width=".9"/></svg>
<svg style="left:288px;top:36px;" width="19" height="19" viewBox="0 0 19 19"><path d="M5.5 3v13M8.2 3v13M10.9 3v13M13.6 3v13M3 5.5h13M3 8.2h13M3 10.9h13M3 13.6h13" stroke="#555" stroke-width=".9"/></svg>
<svg style="left:311px;top:36px;" width="19" height="19" viewBox="0 0 19 19"><path d="M4 9.5L16 3.5M4 9.5L16 6.5M4 9.5H16M4 9.5L16 12.5M4 9.5L16 15.5" stroke="#555" stroke-width=".9"/></svg>
<svg style="left:334px;top:36px;" width="19" height="19" viewBox="0 0 19 19"><path d="M9.5 2.600v5.200M9.5 11.200V16.400M2.600 9.5h5.200M11.200 9.5H16.400M4.400 4.400l3.800 3.800M10.800 10.800l3.800 3.800M14.600 4.400l-3.800 3.800M8.200 10.800l-3.800 3.800" stroke="#555" stroke-width="1.100"/></svg>
<svg style="left:357.5px;top:36px;" width="19" height="19" viewBox="0 0 19 19"><circle cx="9.5" cy="9.5" r="6.6" fill="none" stroke="#666" stroke-width=".9"/><circle cx="9.5" cy="9.5" r="4.2" fill="none" stroke="#666" stroke-width=".9"/><circle cx="9.5" cy="9.5" r="1.9" fill="none" stroke="#666" stroke-width=".9"/></svg>
<svg style="left:381px;top:36px;" width="19" height="19" viewBox="0 0 19 19"><path d="M4.5 4.6C11 4 11.5 7 8.5 9.5C5.5 12 7 14.8 14.5 14" fill="none" stroke="#555" stroke-width="1"/><circle cx="4.4" cy="4.6" r="1.3" fill="#444"/><circle cx="14.6" cy="14" r="1.3" fill="#444"/></svg>
<svg style="left:404px;top:36px;" width="19" height="19" viewBox="0 0 19 19"><circle cx="9.5" cy="9.5" r="5.8" fill="none" stroke="#444" stroke-width="1.2"/><g fill="#444"><circle cx="9.5" cy="3.7" r="1.1"/><circle cx="9.5" cy="15.3" r="1.1"/><circle cx="3.7" cy="9.5" r="1.1"/><circle cx="15.3" cy="9.5" r="1.1"/><circle cx="5.4" cy="5.4" r="1"/><circle cx="13.6" cy="5.4" r="1"/><circle cx="5.4" cy="13.6" r="1"/><circle cx="13.6" cy="13.6" r="1"/></g></svg>
<svg style="left:427px;top:36px;" width="19" height="19" viewBox="0 0 19 19"><g fill="none" stroke="#a8a8a8" stroke-width=".9"><circle cx="9.5" cy="9.5" r="2.6"/><path d="M8.4 3.2h2.2l.4 1.7l1.3.6l1.5-.9l1.6 1.6l-.9 1.5l.6 1.3l1.7.4v2.2l-1.7.4l-.6 1.3l.9 1.5l-1.6 1.6l-1.5-.9l-1.3.6l-.4 1.7H8.4l-.4-1.7l-1.3-.6l-1.5.9l-1.6-1.6l.9-1.5l-.6-1.3l-1.7-.4V8.400l1.700-.4l.6-1.300l-.9-1.500l1.600-1.600l1.500.9l1.300-.6z"/></g></svg>
<svg style="left:456px;top:41px;" width="10" height="9" viewBox="0 0 10 9"><path d="M3 2.5l4 4M7 2.5l-4 4" stroke="#555" stroke-width="1.1"/></svg>
<svg style="left:3px;top:66px;" width="24" height="24" viewBox="0 0 24 24"><path d="M20.6 3.4c.8.8.5 1.800-.3 2.600l-8.6 8.400l-2.300-2.300l8.600-8.400c.8-.8 1.800-1.100 2.600-.3z" fill="#4c6679"/><path d="M8.600 12.800l2.500 2.500c-.6 2.400-3.200 3.600-7.300 3.200c1.800-1 1.800-4.500 4.800-5.700z" fill="#4c6679"/></svg>
<svg style="left:3px;top:94px;" width="24" height="24" viewBox="0 0 24 24"><path d="M4 12.200l8.600-8.200l7.600 5.200l-8.600 8.800z" fill="#4a4a4a"/><path d="M9.200 8.700l4.300-3.600l5 3.500l-4.400 4.300z" fill="#f4f4f4"/></svg>
<svg style="left:3px;top:122px;" width="24" height="24" viewBox="0 0 24 24"><rect x="6.500" y="6.500" width="11.500" height="11.500" fill="none" stroke="#5a5a5a" stroke-width="1.200"/></svg>
<svg style="left:3px;top:150px;" width="24" height="24" viewBox="0 0 24 24"><path d="M10.200 16.200l1-3.400l7.200-7.200l2.400 2.400l-7.200 7.200z" fill="#4a4a4a"/><path d="M17.200 6.800l2.400 2.400" stroke="#ddd" stroke-width=".7"/><g fill="#4a4a4a"><rect x="3.200" y="11.200" width="2" height="2"/><rect x="5.400" y="13.400" width="2" height="2"/><rect x="7.600" y="15.600" width="2" height="2"/></g></svg>
<svg style="left:3px;top:182px;" width="24" height="24" viewBox="0 0 24 24"><path d="M12 3.500v17M3.500 12h17" stroke="#555" stroke-width="1.300"/><path d="M12 2.200l2.600 3.200h-5.200z M12 21.800l2.600-3.200h-5.200z M2.200 12l3.200-2.600v5.200z M21.800 12l-3.200-2.600v5.200z" fill="#555"/></svg>
<svg style="left:3px;top:216px;" width="24" height="24" viewBox="0 0 24 24"><rect x="5.500" y="6" width="13" height="12.500" fill="#5a5a5a"/></svg>
<svg style="left:3px;top:244px;" width="24" height="24" viewBox="0 0 24 24"><path d="M4.200 12l6.300-5.800l7.800 6.700l-6.800 6.400z" fill="#4a4a4a"/><path d="M5.800 12.100l4.800-4.300l5.600 4.700z" fill="#eee"/><path d="M7.600 8.400c-1.300-3 1.400-5.400 3.200-2.300" fill="none" stroke="#4a4a4a" stroke-width="1.200"/><path d="M18.600 13.600c1.200 1.800 1.600 3.200 1.200 4.400c-.5 1.200-2 1.100-2.300-.1c-.2-1.100.3-2.600 1.100-4.300z" fill="#4a4a4a"/></svg>
<svg style="left:3px;top:272px;" width="24" height="24" viewBox="0 0 24 24"><defs><linearGradient id="gt" x1="0" y1="0" x2="1" y2="1"><stop offset="0" stop-color="#3c3c3c"/><stop offset="1" stop-color="#d8d8d8"/></linearGradient></defs><rect x="4.500" y="6" width="15.500" height="12.500" fill="url(#gt)" stroke="#555" stroke-width=".8"/></svg>
<svg style="left:3px;top:304px;" width="24" height="24" viewBox="0 0 24 24"><rect x="6" y="6" width="12.500" height="12.500" fill="none" stroke="#4a4a4a" stroke-width="1.300" stroke-dasharray="2.200 1.800"/></svg>
<svg style="left:3px;top:332px;" width="24" height="24" viewBox="0 0 24 24"><path d="M4.500 16c-1.500-2.400 1.200-5.200 4.600-6.800c3-1.500 4.600-4 8-3.600c3 .5 3 4.400 1 6.800c-1.800 2.200-3.600 2.600-6 3.800c-2.800 1.400-6.200 2-7.600-.2z" fill="none" stroke="#8a8a8a" stroke-width="1.200" stroke-dasharray="1.800 1.600"/></svg>
<svg style="left:3px;top:360px;" width="24" height="24" viewBox="0 0 24 24"><path d="M4.600 19.400l9-9.400l1.800 1.700l-9 9.400z" fill="#4a4a4a"/><path d="M16.800 4v3.400M20.600 8.600h-3.200M19.600 5.200l-2.200 2.200M13.600 5l1.800 1.800M19.400 11.600l-1.600-1.600" stroke="#777" stroke-width="1"/></svg>
<svg style="left:3px;top:388px;" width="24" height="24" viewBox="0 0 24 24"><path d="M5.500 8.500v11h11" fill="none" stroke="#4a4a4a" stroke-width="1.300" stroke-dasharray="2.200 1.800"/><path d="M5.500 8.500h6M16.500 19.500v-4" fill="none" stroke="#4a4a4a" stroke-width="1.300" stroke-dasharray="2.200 1.800"/><path d="M10.600 15.200l.9-3.200l7.400-7.400l2.300 2.300l-7.400 7.400z" fill="#4a4a4a"/></svg>
<svg style="left:3px;top:414px;" width="24" height="24" viewBox="0 0 24 24"><path d="M5.500 8.500v10.500h10.500" fill="none" stroke="#4a4a4a" stroke-width="1.300" stroke-dasharray="2.200 1.800"/><path d="M9.500 9.800l6.600-6l5 4.300l-6.600 6.400z" fill="#4a4a4a"/><path d="M13.200 7.800l3-2.600l3.200 2.700l-3 2.800z" fill="#f2f2f2"/></svg>
<svg style="left:3px;top:476px;" width="24" height="24" viewBox="0 0 24 24"><path d="M4.500 8.500l5.500-4.500l7 2.500l-1 6l-8 2z" fill="#f4f4f4" stroke="#5a5a5a" stroke-width="1.200"/><path d="M12.600 11.200l8.600 3.600l-3.600 1.400l-1.400 3.800z" fill="#4a4a4a"/></svg>
<span id="t85" class="t" style="left:7.5px;top:447.04px;font-size:25px;line-height:25px;color:#6a6a6a;font-weight:bold;transform:scaleX(0.8989);font-family:&quot;Liberation Serif&quot;,serif;">T</span>
<svg style="left:839px;top:78px;" width="18.5" height="17.5" viewBox="0 0 18.5 17.5"><circle cx="7.800" cy="7.400" r="3.900" fill="#f6f6f6" stroke="#555" stroke-width="1.100"/><path d="M10.700 10.400l3.600 3.600" stroke="#555" stroke-width="1.700" stroke-linecap="round"/><path d="M7 6.200l1-.800v4.200" stroke="#555" stroke-width=".9" fill="none"/></svg>
<svg style="left:866.5px;top:78px;" width="18.5" height="17.5" viewBox="0 0 18.5 17.5"><circle cx="7.800" cy="7.400" r="3.900" fill="#f6f6f6" stroke="#555" stroke-width="1.100"/><path d="M10.700 10.400l3.600 3.600" stroke="#555" stroke-width="1.700" stroke-linecap="round"/><path d="M5.800 7.400h4M7.800 5.400v4" stroke="#555" stroke-width="1"/></svg>
<svg style="left:890px;top:78px;" width="18.5" height="17.5" viewBox="0 0 18.5 17.5"><rect x="3.500" y="3.500" width="11.500" height="10.500" fill="none" stroke="#666" stroke-width=".9"/><path d="M5 7V5h2.200M11.300 5h2.200v2M13.500 10.500v2h-2.200M7.200 12.500H5v-2M5 5l2.600 2.400M13.500 5l-2.600 2.400M13.500 12.500l-2.600-2.400M5 12.500l2.600-2.400" stroke="#666" stroke-width=".9" fill="none"/></svg>
<svg style="left:913.5px;top:78px;" width="18.5" height="17.5" viewBox="0 0 18.5 17.5"><circle cx="7.800" cy="7.400" r="3.900" fill="#f6f6f6" stroke="#555" stroke-width="1.100"/><path d="M10.700 10.400l3.600 3.600" stroke="#555" stroke-width="1.700" stroke-linecap="round"/><path d="M5.800 7.400h4" stroke="#555" stroke-width="1"/></svg>
<svg style="left:942px;top:78px;" width="18.5" height="17.5" viewBox="0 0 18.5 17.5"><path d="M9.200 2.800a6 6 0 1 1-5.600 3.800" fill="none" stroke="#555" stroke-width="1.200"/><path d="M9.800 .8v4l-3-2z" fill="#555"/><path d="M6 8.200l5.200-2l1.600 3.600l-5.200 2z" fill="#666"/></svg>
<svg style="left:965px;top:78px;" width="18.5" height="17.5" viewBox="0 0 18.5 17.5"><rect x="5" y="5" width="8.500" height="7.500" fill="#8a8a8a"/><path d="M3.200 5.200V3.400h1.800M13.500 3.400h1.800v1.800M15.300 12.300v1.800h-1.800M5 14.100H3.200v-1.800" stroke="#777" stroke-width=".9" fill="none"/></svg>
<svg style="left:988.5px;top:78px;" width="18.5" height="17.5" viewBox="0 0 18.5 17.5"><path d="M9.300 2.800a6 6 0 1 0 5.600 3.800" fill="none" stroke="#555" stroke-width="1.200"/><path d="M8.700 .8v4l3-2z" fill="#555"/><path d="M5.800 6.400l5.200 2l-1.600 3.600l-5.200-2z" fill="#666"/></svg>
<svg style="left:33px;top:506.5px;" width="19" height="17.5" viewBox="0 0 19 17.5"><path d="M5.200 10.600h8.800a2.300 2.300 0 0 0 .3-4.600a3.400 3.400 0 0 0-6.500-.9a2.300 2.300 0 0 0-3 2.200a2 2 0 0 0 .4 3.300z" fill="#4a4a4a"/><path d="M9.500 8v6.500" stroke="#4a4a4a" stroke-width="2.200"/><path d="M6.400 12.200h6.200l-3.100 3.400z" fill="#4a4a4a"/><path d="M9.500 7.200v3.600" stroke="#eee" stroke-width=".9"/></svg>
<svg style="left:57px;top:506.5px;" width="18" height="17.5" viewBox="0 0 18 17.5"><path d="M4.5 3.500h6l3 3v8h-9z" fill="#fafafa" stroke="#666" stroke-width="1"/><path d="M10.5 3.500v3h3" fill="none" stroke="#666" stroke-width=".8"/></svg>
<svg style="left:80px;top:506.5px;" width="22.5" height="17.5" viewBox="0 0 22.5 17.5"><path d="M3.5 3.500h6l3 3v8h-9z" fill="#fafafa" stroke="#666" stroke-width="1"/><path d="M9.5 3.500v3h3" fill="none" stroke="#666" stroke-width=".8"/><rect x="5.500" y="8.500" width="4" height="4" fill="#666"/><path d="M15.500 8l2.200 2.600l2.200-2.600z" fill="#555"/></svg>
<svg style="left:839.5px;top:507px;" width="19" height="18" viewBox="0 0 19 18"><path d="M5 3.500h6l3 3v8h-9z" fill="#fafafa" stroke="#666" stroke-width="1"/><path d="M11 3.500v3h3" fill="none" stroke="#666" stroke-width=".8"/></svg>
<svg style="left:863px;top:507px;" width="18.6" height="18" viewBox="0 0 18.6 18"><path d="M5 3.500h6l3 3v8h-9z" fill="#fafafa" stroke="#666" stroke-width="1"/><path d="M11 3.500v3h3" fill="none" stroke="#666" stroke-width=".8"/><path d="M8 9.300h3v4.800H8zM8 11.600h3" fill="none" stroke="#666" stroke-width=".8"/></svg>
<svg style="left:886.5px;top:507px;" width="18.4" height="18" viewBox="0 0 18.4 18"><path d="M5 3.500h6l3 3v8h-9z" fill="#fafafa" stroke="#666" stroke-width="1"/><path d="M11 3.500v3h3" fill="none" stroke="#666" stroke-width=".8"/><path d="M8.600 10.400l1-.8v4.600" fill="none" stroke="#666" stroke-width=".9"/></svg>
<svg style="left:909.7px;top:507px;" width="22" height="18" viewBox="0 0 22 18"><path d="M5 4h5l2.500 2.500v7.500h-7.500z" fill="#eceeef" stroke="#dcdfe0" stroke-width="1"/><path d="M16 8.200l2.200 2.600l2.200-2.600z" fill="#555"/></svg>
<svg style="left:936.7px;top:507px;" width="18.4" height="18" viewBox="0 0 18.4 18"><path d="M3 5.200h4.600l1.400 1.600h6.400v7.600H3z" fill="#555"/></svg>
<svg style="left:964.5px;top:507px;" width="18.5" height="18" viewBox="0 0 18.5 18"><rect x="7" y="3.500" width="8" height="8" fill="#f6f6f6" stroke="#666" stroke-width="1"/><rect x="3.500" y="6.500" width="8" height="8" fill="#f6f6f6" stroke="#666" stroke-width="1"/></svg>
<svg style="left:988px;top:507px;" width="18.7" height="18" viewBox="0 0 18.7 18"><rect x="3" y="3.500" width="4" height="3.400" fill="#f6f6f6" stroke="#555" stroke-width=".9"/><rect x="3" y="11" width="4" height="3.400" fill="#555"/><rect x="11" y="7" width="4.500" height="4" fill="#555"/><path d="M7 5.200h2.200v7.500H7M9.200 9h1.800" fill="none" stroke="#555" stroke-width=".9"/></svg>
<svg style="left:883px;top:99px;" width="92" height="92" viewBox="0 0 374 374"><defs><linearGradient id="gC" x1="0" y1="0" x2="0" y2="1"><stop offset="0" stop-color="#b3b3e3"/><stop offset=".45" stop-color="#b5b3e4"/><stop offset=".64" stop-color="#e6c2f6"/><stop offset="1" stop-color="#f2c4fb"/></linearGradient><linearGradient id="gF" x1="0" y1="0" x2="0" y2="1"><stop offset="0" stop-color="#b3b3e3"/><stop offset=".55" stop-color="#b8b5e6"/><stop offset=".8" stop-color="#e2c1f5"/><stop offset="1" stop-color="#f2c4fb"/></linearGradient><linearGradient id="gD" x1="0" y1="0" x2="0" y2="1"><stop offset="0" stop-color="#c6c5f2"/><stop offset=".66" stop-color="#c8c6f3"/><stop offset=".9" stop-color="#e6ccf8"/><stop offset="1" stop-color="#f0d0fb"/></linearGradient></defs><g transform="translate(56,39.599999999999994)"><path d="M6.4,2.6 Q7,-0.5 10,-0.3 L31,0.8 Q35,1.2 33.5,4.5 C31,10 28,17 25.6,22.8 C22,32 19.5,41 17.9,47 C16.5,53 15.6,58 15.5,63.2 C15.3,68 15.5,72 17.9,72.9 C21,73.5 26,65 30,56.1 C31,59 31,61 30.6,63.2 C30,67 28.5,70.5 26.6,73.3 C24.5,77 22,79.5 19.5,80.4 C17.5,81.5 15,82 12.5,81.8 C9,81.5 6.5,80 4.4,77.3 C1.5,73.5 0,68.5 -0.3,63.2 C-0.9,57 -1,50 -0.7,43 C-0.3,36 0.5,29 1.4,22.8 C2.5,16 4.3,9 6.4,2.6Z" fill="#eec9fa"/><path d="M12.9,3.6 L30,4.6 C27.5,10.5 25,16.5 22.6,22.8 C19.5,31 16.5,39.5 14.5,47 C13,53 12.2,58.5 11.9,63.2 L11.9,69.3 C10.9,67.5 10.2,65.5 9.8,63.2 C8.5,57 7.6,50 7.8,43 C8,36 8.3,29 9,22.8 C9.8,16 11.2,9.5 12.9,3.6Z" fill="#fff"/><path d="M-13.6,23.6 C-13.4,19 -9.5,15.6 -4,13.9 C-0.5,12.9 3,12.6 6,12.8 C10,13.2 14,15.5 18,17 C23,18.8 29,19.3 34,18.8 C36,18.5 38,17.9 39.7,17.1" stroke="#eec9fa" stroke-width="2.4" fill="none" stroke-linecap="round"/></g><g transform="translate(166,39)"><path d="M7,3 Q7.8,0.2 11,0.3 L32,0.8 Q36.5,1 35.5,5 C34,11 30,21 26.6,29.5 C23,39 19,54 17.6,63.8 C17,68 17.3,72.5 19.5,73.3 C22,74 27,64 30.6,56.7 C31.5,62 30.5,68 28.6,71.9 C26.5,77 22.5,82 15.5,83 C9,83.5 4,77 2.3,69.9 C0.5,62 0,56 0.3,49.7 C0.6,40 2.5,20 7,3 Z" fill="#eec9fa"/><path d="M-12.3,24.6 C-12.5,19 -8,15 -2,14.2 C1,13.8 4,13.6 7,13.6" stroke="#eec9fa" stroke-width="2.5" fill="none" stroke-linecap="round"/><path d="M29,19.6 C33,20 37,19.4 41,17.8" stroke="#eec9fa" stroke-width="2" fill="none" stroke-linecap="round"/></g><g transform="translate(51,144.3)"><path d="M7,3 Q7.8,0.2 11,0.3 L32,0.8 Q36.5,1 35.5,5 C34,11 30,21 26.6,29.5 C23,39 19,54 17.6,63.8 C17,68 17.3,72.5 19.5,73.3 C22,74 27,64 30.6,56.7 C31.5,62 30.5,68 28.6,71.9 C26.5,77 22.5,82 15.5,83 C9,83.5 4,77 2.3,69.9 C0.5,62 0,56 0.3,49.7 C0.6,40 2.5,20 7,3 Z" fill="url(#gC)"/><path d="M-12.3,24.6 C-12.5,19 -8,15 -2,14.2 C1,13.8 4,13.6 7,13.6" stroke="#bab9e8" stroke-width="3.2" fill="none" stroke-linecap="round"/><path d="M29,19.6 C33,20 37,19.4 41,17.8" stroke="#bab9e8" stroke-width="2" fill="none" stroke-linecap="round"/></g><g transform="translate(161,144.9)"><path d="M7,3 Q7.8,0.2 11,0.3 L32,0.8 Q36.5,1 35.5,5 C34,11 30,21 26.6,29.5 C23,39 19,54 17.6,63.8 C17,68 17.3,72.5 19.5,73.3 C22,74 27,64 30.6,56.7 C31.5,62 30.5,68 28.6,71.9 C26.5,77 22.5,82 15.5,83 C9,83.5 4,77 2.3,69.9 C0.5,62 0,56 0.3,49.7 C0.6,40 2.5,20 7,3 Z" fill="url(#gD)" stroke="url(#gD)" stroke-width="3.2" stroke-linejoin="round" transform="translate(1.3,-0.6)"/><path d="M-12.3,24.6 C-12.5,19 -8,15 -2,14.2 C1,13.8 4,13.6 7,13.6 M-12.3,24.6 v1.8 M-8.6,21.8 v1.6" stroke="#b9b8e9" stroke-width="3.8" fill="none" stroke-linecap="round"/><path d="M29,20.6 C33,20.6 38,19.4 42.5,16.2 C39,20.5 34,22.4 29,22.4Z" fill="#bcbbea" stroke="#bcbbea" stroke-width="1"/><path d="M7,3 Q7.8,0.2 11,0.3 L32,0.8 Q36.5,1 35.5,5 C34,11 30,21 26.6,29.5 C23,39 19,54 17.6,63.8 C17,68 17.3,72.5 19.5,73.3 C22,74 27,64 30.6,56.7 C31.5,62 30.5,68 28.6,71.9 C26.5,77 22.5,82 15.5,83 C9,83.5 4,77 2.3,69.9 C0.5,62 0,56 0.3,49.7 C0.6,40 2.5,20 7,3 Z" fill="url(#gC)"/></g><g transform="translate(44.30000000000001,251.60000000000002)"><path d="M7,3 Q7.8,0.2 11,0.3 L32,0.8 Q36.5,1 35.5,5 C34,11 30,21 26.6,29.5 C23,39 19,54 17.6,63.8 C17,68 17.3,72.5 19.5,73.3 C22,74 27,64 30.6,56.7 C31.5,62 30.5,68 28.6,71.9 C26.5,77 22.5,82 15.5,83 C9,83.5 4,77 2.3,69.9 C0.5,62 0,56 0.3,49.7 C0.6,40 2.5,20 7,3 Z" fill="url(#gD)" stroke="url(#gD)" stroke-width="3.2" stroke-linejoin="round" transform="translate(1.3,-0.6)"/><path d="M-12.3,24.6 C-12.5,19 -8,15 -2,14.2 C1,13.8 4,13.6 7,13.6 M-12.3,24.6 v1.8 M-8.6,21.8 v1.6" stroke="#b9b8e9" stroke-width="3.8" fill="none" stroke-linecap="round"/><path d="M29,20.6 C33,20.6 38,19.4 42.5,16.2 C39,20.5 34,22.4 29,22.4Z" fill="#bcbbea" stroke="#bcbbea" stroke-width="1"/><path d="M7,3 Q7.8,0.2 11,0.3 L32,0.8 Q36.5,1 35.5,5 C34,11 30,21 26.6,29.5 C23,39 19,54 17.6,63.8 C17,68 17.3,72.5 19.5,73.3 C22,74 27,64 30.6,56.7 C31.5,62 30.5,68 28.6,71.9 C26.5,77 22.5,82 15.5,83 C9,83.5 4,77 2.3,69.9 C0.5,62 0,56 0.3,49.7 C0.6,40 2.5,20 7,3 Z" fill="url(#gF)"/><path d="M14,18 C17,17.5 18.6,22 17.6,29 C16.6,38 13,50 9.6,58.5 C8.6,50 8.2,40 9.4,31 C10.4,24 11.6,18.6 14,18Z" fill="none" stroke="#fbf4ff" stroke-width="1.1"/><circle cx="8.6" cy="67.6" r="2.3" fill="none" stroke="#fbf4ff" stroke-width="1.1"/></g><g transform="translate(155.5,250.3)"><path d="M7,3 Q7.8,0.2 11,0.3 L32,0.8 Q36.5,1 35.5,5 C34,11 30,21 26.6,29.5 C23,39 19,54 17.6,63.8 C17,68 17.3,72.5 19.5,73.3 C22,74 27,64 30.6,56.7 C31.5,62 30.5,68 28.6,71.9 C26.5,77 22.5,82 15.5,83 C9,83.5 4,77 2.3,69.9 C0.5,62 0,56 0.3,49.7 C0.6,40 2.5,20 7,3 Z" fill="url(#gD)" stroke="url(#gD)" stroke-width="3.2" stroke-linejoin="round" transform="translate(1.3,-0.6)"/><path d="M-12.3,24.6 C-12.5,19 -8,15 -2,14.2 C1,13.8 4,13.6 7,13.6 M-12.3,24.6 v1.8 M-8.6,21.8 v1.6" stroke="#b9b8e9" stroke-width="3.8" fill="none" stroke-linecap="round"/><path d="M29,20.6 C33,20.6 38,19.4 42.5,16.2 C39,20.5 34,22.4 29,22.4Z" fill="#bcbbea" stroke="#bcbbea" stroke-width="1"/><path d="M7,3 Q7.8,0.2 11,0.3 L32,0.8 Q36.5,1 35.5,5 C34,11 30,21 26.6,29.5 C23,39 19,54 17.6,63.8 C17,68 17.3,72.5 19.5,73.3 C22,74 27,64 30.6,56.7 C31.5,62 30.5,68 28.6,71.9 C26.5,77 22.5,82 15.5,83 C9,83.5 4,77 2.3,69.9 C0.5,62 0,56 0.3,49.7 C0.6,40 2.5,20 7,3 Z" fill="url(#gF)"/><path d="M14,18 C17,17.5 18.6,22 17.6,29 C16.6,38 13,50 9.6,58.5 C8.6,50 8.2,40 9.4,31 C10.4,24 11.6,18.6 14,18Z" fill="none" stroke="#fbf4ff" stroke-width="1.1"/><circle cx="8.6" cy="67.6" r="2.3" fill="none" stroke="#fbf4ff" stroke-width="1.1"/></g><g transform="translate(-349,-103)"><path d="M445.8,398.5 C445.8,390.8 452,385.4 460.5,385.4 C469,385.4 478,391 488.4,400.6 C478,408.8 469,411.8 460.5,411.8 C452,411.8 445.8,406.2 445.8,398.5Z" fill="#bebdee"/><path d="M448.2,398.5 C448.2,392.4 453,387.6 460.5,387.6 C468,387.6 476,392.4 485,400.4 C476,406.8 468,409.600 460.5,409.600 C453,409.600 448.2,404.6 448.2,398.5Z" fill="#cac9f5"/><path d="M450.6,392.5 C449.200,396 449.300,402 451,405.5 M455.4,389.5 V408 M461.6,388.600 V409 M467.4,390 V407.6" stroke="#e2e1fa" stroke-width="1.1" fill="none"/><path d="M471.5,393.5 L478.5,399.6 L471.5,405.5Z" fill="#dad9f8"/><path d="M542.6,394 C548,386.5 556,382.3 565,382.3 C574.5,382.3 581.4,388 581.4,396 C581.4,404 574.5,409.5 565,409.5 C556.5,409.5 548,404 544.5,397.5Z" fill="#bdbcec"/><path d="M547,394 C552,388 558,385 565,385 C572,385 577.5,389.5 578.5,396 C577,402 572,406.5 565,406.5 C558,406.5 552,402 547,394Z" fill="#c8c7f4"/><path d="M551.5,390.500 v4 M555.500,388 v5 M559.800,386.400 v5.500 M564.200,385.800 v5 M568.600,386.600 v3.600" stroke="#f1f0fd" stroke-width="1.300"/><path d="M549,396.500 C554,401.500 562,403.500 570,401.500" stroke="#b6b5e8" stroke-width="1.200" fill="none"/></g><circle cx="40.2" cy="34.5" r="1.35" fill="#000"/><circle cx="155.6" cy="37.5" r="1.35" fill="#000"/><circle cx="161.3" cy="37.5" r="1.35" fill="#000"/><circle cx="25.5" cy="147.1" r="1.35" fill="#000"/><circle cx="32.8" cy="146.7" r="1.35" fill="#000"/><circle cx="40.3" cy="146.7" r="1.35" fill="#000"/><circle cx="138.1" cy="148.1" r="1.35" fill="#000"/><circle cx="147.2" cy="148.1" r="1.35" fill="#000"/><circle cx="156.7" cy="148.1" r="1.35" fill="#000"/><circle cx="165.4" cy="146.7" r="1.35" fill="#000"/><circle cx="6.5" cy="253.6" r="1.35" fill="#000"/><circle cx="12.0" cy="253.6" r="1.35" fill="#000"/><circle cx="22.4" cy="250.7" r="1.35" fill="#000"/><circle cx="31.8" cy="252.5" r="1.35" fill="#000"/><circle cx="41.3" cy="251.8" r="1.35" fill="#000"/><circle cx="112.6" cy="251.8" r="1.35" fill="#000"/><circle cx="122.0" cy="251.3" r="1.35" fill="#000"/><circle cx="126.0" cy="251.3" r="1.35" fill="#000"/><circle cx="131.8" cy="251.3" r="1.35" fill="#000"/><circle cx="135.7" cy="251.3" r="1.35" fill="#000"/><circle cx="140.0" cy="251.3" r="1.35" fill="#000"/></svg>
<span id="t86" class="t" style="left:932.5px;top:174.74px;font-size:4.2px;line-height:4.2px;color:#000;font-weight:bold;transform:scaleX(0.8855);font-family:&quot;DejaVu Sans&quot;,sans-serif;letter-spacing:0px;">Orezyy</span>
<span id="t87" class="t" style="left:932.5px;top:178.78px;font-size:3.8px;line-height:3.8px;color:#000;font-weight:bold;transform:scaleX(0.8889);font-family:&quot;DejaVu Sans&quot;,sans-serif;letter-spacing:0px;">HHD247</span>
</div></body></html>
